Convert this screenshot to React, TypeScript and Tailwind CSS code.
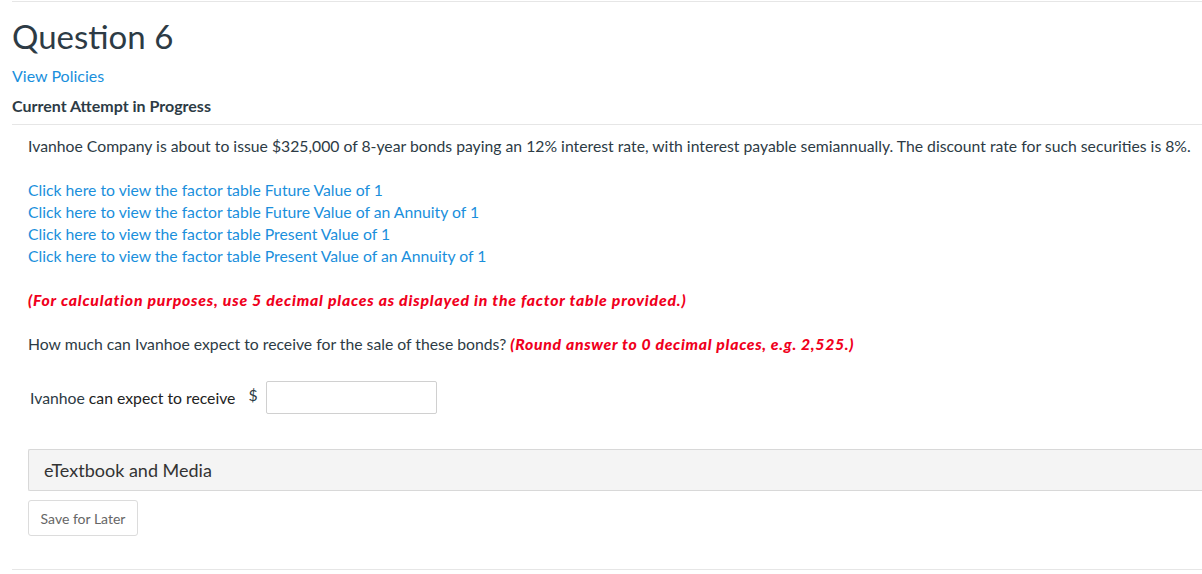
const links = [
  "Click here to view the factor table Future Value of 1",
  "Click here to view the factor table Future Value of an Annuity of 1",
  "Click here to view the factor table Present Value of 1",
  "Click here to view the factor table Present Value of an Annuity of 1",
];

export default function App() {
  return (
    <div className="w-[1202px] h-[574px] overflow-hidden bg-white font-['Lato','Noto_Sans',sans-serif] text-[#2d3b45]">
      <div className="ml-3 border-t border-[#e6e6e6] mt-px">
        {/* Header */}
        <h1 className="text-[33px] leading-none font-normal pt-[18px]">Question 6</h1>
        <a className="block text-[16px] text-[#1a8fdc] mt-[13px] leading-[20px]">View Policies</a>
        <p className="text-[16px] font-bold mt-[10px] leading-[20px]">Current Attempt in Progress</p>

        <div className="border-t border-[#e6e6e6] mt-[8px] pl-4">
          <p className="text-[15.75px] leading-[22px] pt-[10px]">
            Ivanhoe Company is about to issue $325,000 of 8-year bonds paying an 12% interest rate, with interest
            payable semiannually. The discount rate for such securities is 8%.
          </p>

          <div className="mt-[22px] flex flex-col">
            {links.map((l) => (
              <a key={l} className="text-[15.75px] leading-[22px] text-[#1a8fdc]">
                {l}
              </a>
            ))}
          </div>

          <p className="mt-[22px] text-[15.75px] leading-[22px] font-black italic tracking-[0.8px] text-[#f0001c]">
            (For calculation purposes, use 5 decimal places as displayed in the factor table provided.)
          </p>

          <p className="mt-[22px] text-[15.75px] leading-[22px]">
            How much can Ivanhoe expect to receive for the sale of these bonds?{" "}
            <span className="font-black italic tracking-[0.7px] text-[#f0001c]">
              (Round answer to 0 decimal places, e.g. 2,525.)
            </span>
          </p>

          <div className="mt-[26px] flex items-center text-[15.75px] pl-[2px]">
            <span className="text-[#2d3b45]">Ivanhoe</span>
            <span className="ml-[4px] text-[#222]">can expect to receive</span>
            <span className="ml-[13px] mt-[-6px]">$</span>
            <input
              type="text"
              className="ml-[8px] w-[171px] h-[33px] border border-[#d0d0d0] rounded-[2px] outline-none"
            />
          </div>

          <div className="mt-[35px] h-[42px] bg-[#f4f4f4] border-y border-l border-[#d8d8d8] rounded-l-[2px] flex items-center pl-[15px] mr-[-10px]">
            <span className="text-[18px] text-[#333]">eTextbook and Media</span>
          </div>

          <button className="mt-[9px] h-[36px] w-[110px] border border-[#dcdcdc] rounded-[3px] text-[14px] text-[#666] bg-white">
            Save for Later
          </button>
        </div>

        <div className="border-t border-[#e6e6e6] mt-[33px]" />
      </div>
    </div>
  );
}
